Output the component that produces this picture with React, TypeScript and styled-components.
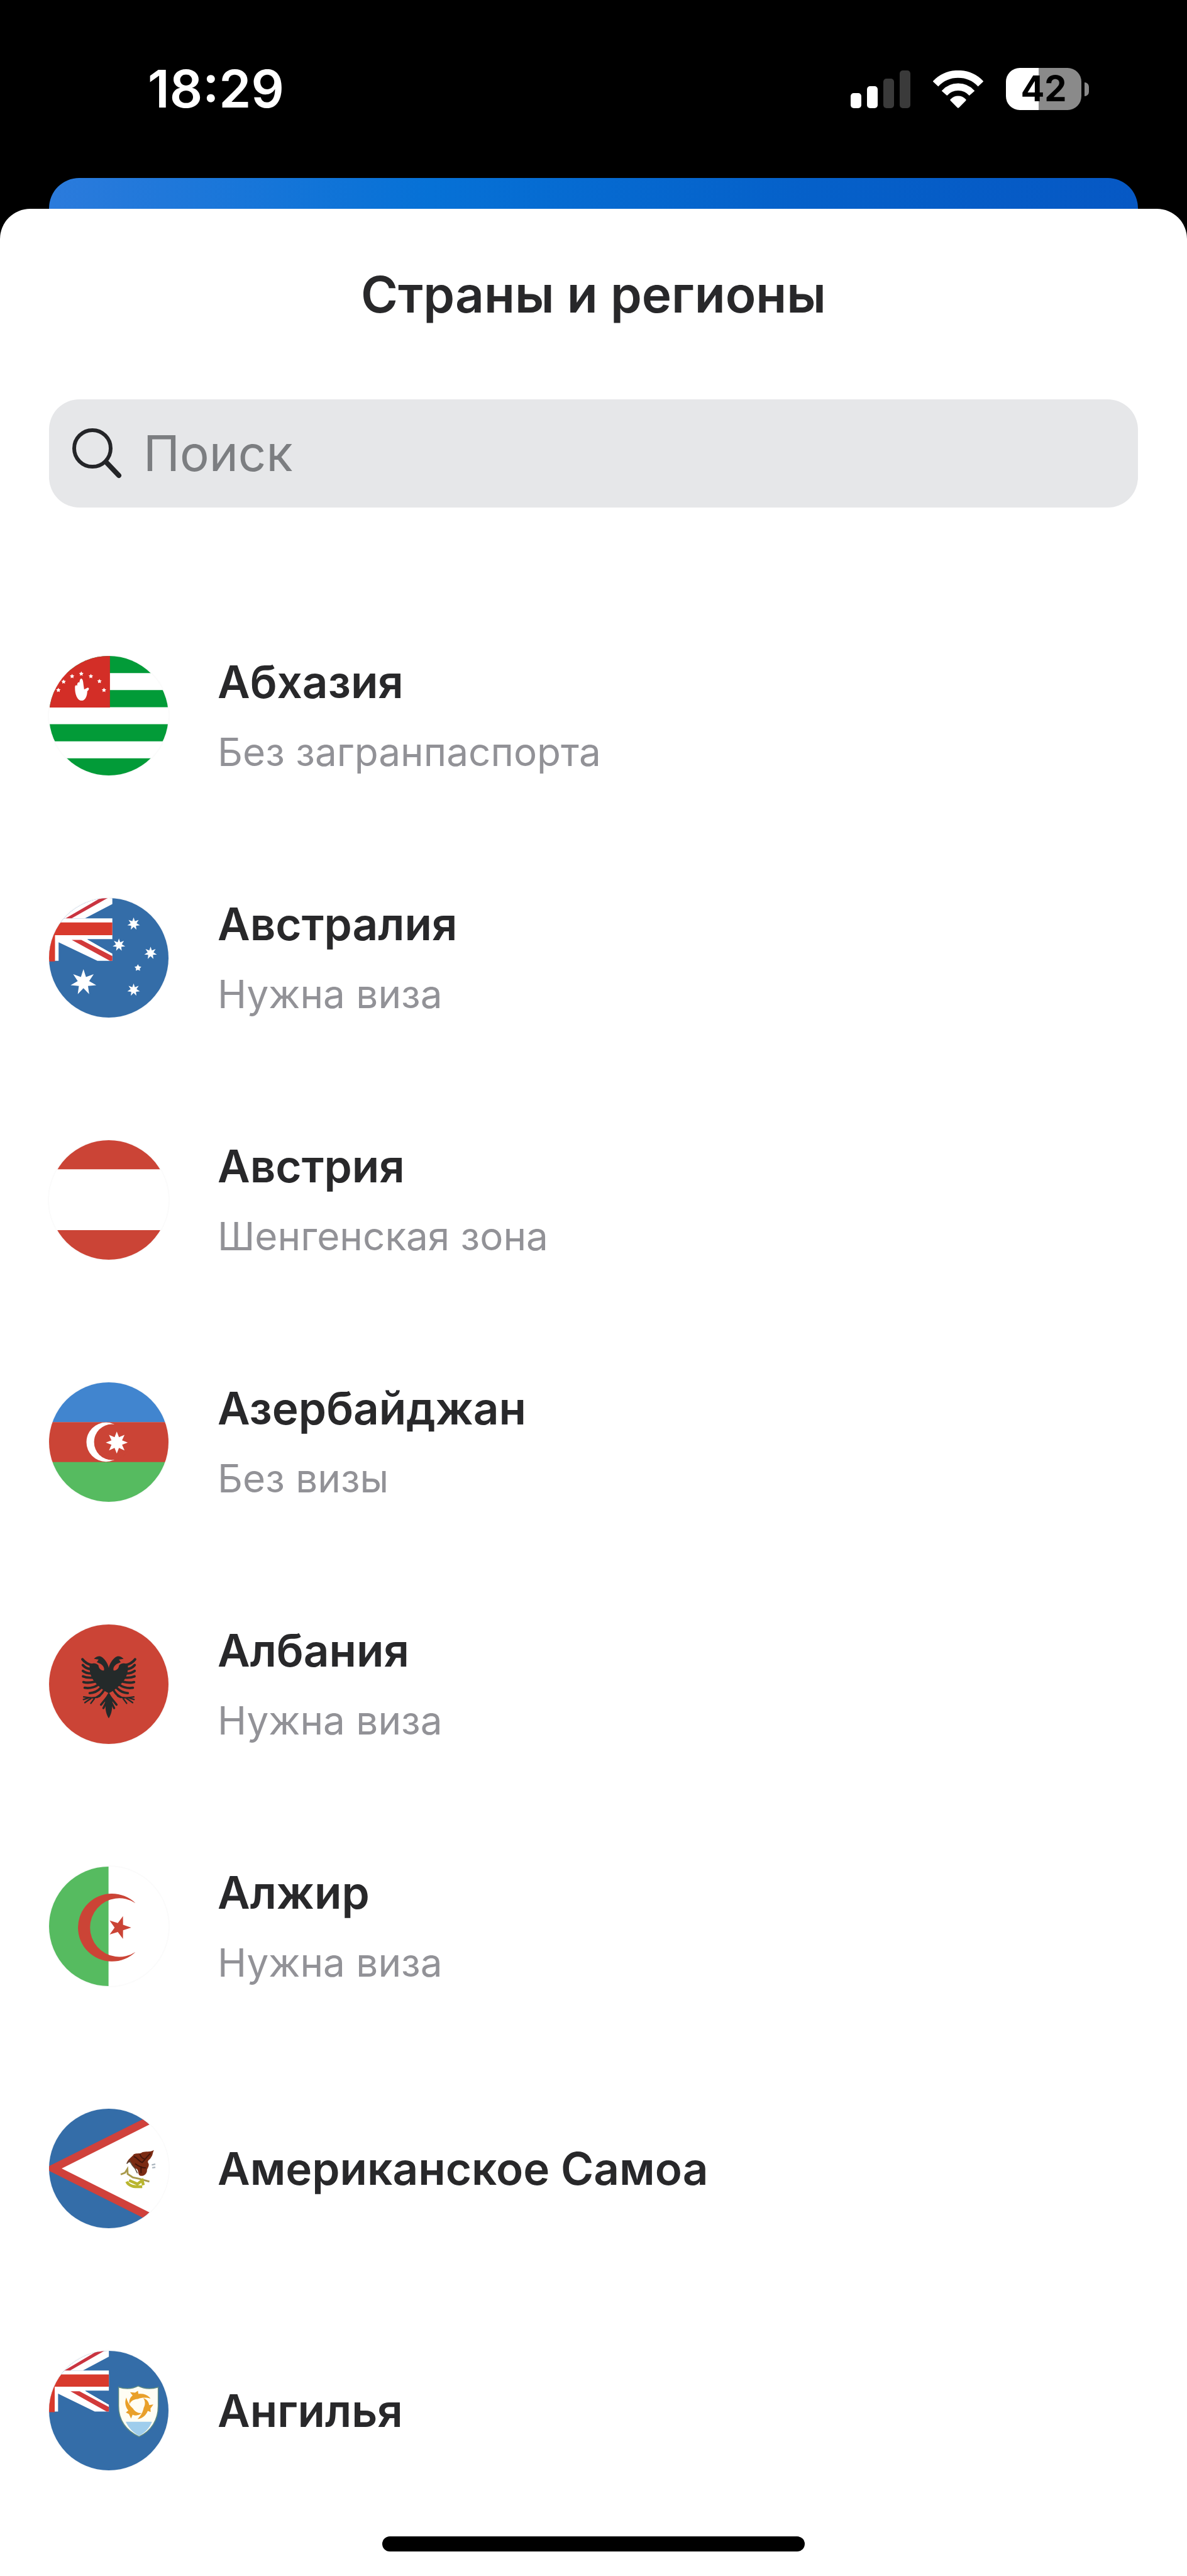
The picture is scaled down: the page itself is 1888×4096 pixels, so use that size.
import React from "react";
import styled, { createGlobalStyle } from "styled-components";

const GlobalStyle = createGlobalStyle`
  *, *::before, *::after { box-sizing: border-box; }
  body {
    margin: 0;
    background: #000;
    font-family: Inter, Roboto, "Liberation Sans", sans-serif;
  }
`;

const Screen = styled.div`
  display: flex;
  flex-direction: column;
  min-height: 100vh;
  background: #000;
`;

const StatusBar = styled.header`
  display: flex;
  align-items: center;
  justify-content: space-between;
  height: 283px;
  padding: 0 156px 0 235px;
`;

const Clock = styled.time`
  color: #fff;
  font-size: 82px;
  line-height: 96px;
  font-weight: 600;
`;

const Indicators = styled.div`
  display: flex;
  align-items: center;
  gap: 36px;
`;

const Battery = styled.div`
  display: flex;
  align-items: center;
  gap: 5px;
`;

const BatteryBody = styled.div<{ $level: number }>`
  width: 120px;
  height: 67px;
  border-radius: 22px;
  background: linear-gradient(
    to right,
    #fff ${(p) => p.$level}%,
    #8a8a8a ${(p) => p.$level}%
  );
  color: #000;
  font-size: 56px;
  line-height: 67px;
  font-weight: 700;
  text-align: center;
`;

const BatteryTip = styled.div`
  width: 7px;
  height: 22px;
  border-radius: 0 7px 7px 0;
  background: #8a8a8a;
`;

const BackCard = styled.div`
  height: 97px;
  margin: 0 78px -48px;
  border-radius: 48px 48px 0 0;
  background: linear-gradient(to right, #2b7bdc 0%, #0671d6 35%, #0560c9 70%, #0658c4 100%);
`;

const Sheet = styled.main`
  display: flex;
  flex-direction: column;
  flex: 1;
  padding: 88px 78px 40px;
  border-radius: 48px 48px 0 0;
  background: #fff;
  z-index: 1;
`;

const Title = styled.h1`
  margin: 0 0 119px;
  color: #28282a;
  font-size: 80px;
  line-height: 96px;
  font-weight: 600;
  text-align: center;
`;

const SearchBox = styled.label`
  display: flex;
  align-items: center;
  gap: 34px;
  height: 172px;
  padding: 0 36px;
  border-radius: 48px;
  background: #e6e7e9;
`;

const SearchInput = styled.input`
  flex: 1;
  min-width: 0;
  padding: 0;
  border: 0;
  outline: 0;
  background: transparent;
  color: #28282a;
  font-family: inherit;
  font-size: 78px;
  line-height: 96px;

  &::placeholder {
    color: #7c7e81;
    opacity: 1;
  }
`;

const CountryList = styled.ul`
  margin: 138px 0 0;
  padding: 0;
  list-style: none;
`;

const CountryButton = styled.button`
  display: flex;
  align-items: center;
  gap: 78px;
  width: 100%;
  height: 385px;
  padding: 0;
  border: 0;
  background: transparent;
  font-family: inherit;
  text-align: left;
  cursor: pointer;
`;

const FlagFrame = styled.svg`
  flex: none;
  width: 190px;
  height: 190px;
  border-radius: 50%;
  background: #fff;
  box-shadow: 0 0 0 2px #fbfbfb;
`;

const CountryText = styled.span`
  display: flex;
  flex-direction: column;
  gap: 28px;
`;

const CountryName = styled.span`
  color: #28282a;
  font-size: 71px;
  line-height: 88px;
  font-weight: 600;
`;

const EntryRule = styled.span`
  color: #929297;
  font-size: 62px;
  line-height: 80px;
`;

const HomeIndicator = styled.div`
  align-self: center;
  width: 672px;
  height: 24px;
  margin-top: 8px;
  border-radius: 12px;
  background: #000;
`;

const BLUE = "#346da8";
const RED = "#cb4436";
const GREEN = "#56bb60";

function starPoints(cx: number, cy: number, n: number, outer: number, inner: number, start = -90) {
  return Array.from({ length: n * 2 }, (_, i) => {
    const r = i % 2 === 0 ? outer : inner;
    const a = ((start + (i * 180) / n) * Math.PI) / 180;
    return `${(cx + r * Math.cos(a)).toFixed(2)},${(cy + r * Math.sin(a)).toFixed(2)}`;
  }).join(" ");
}

function UnionCanton() {
  return (
    <g>
      <path d="M0 -5H53V5L30 17H0Z" fill="#fff" />
      <path d="M12 18L43 0H49L17 18Z" fill="#c93440" />
      <path d="M0 17H53V34.5H32L53 46.5V52.5H40.5L8 37V52.5H0Z" fill="#fff" />
      <path d="M0 20.4H53V31H5V53H0Z" fill="#d83a2d" />
      <path d="M32 34.5H53V46.5Z" fill={BLUE} />
      <path d="M19 35H27L53 48.5V52.5H51Z" fill="#d23a3a" />
    </g>
  );
}

function Abkhazia() {
  const stars = [[7.8, 28.6], [12.2, 21.6], [19.3, 17], [27, 14.9], [35, 17], [42.2, 21.2], [46, 28.6]];
  return (
    <>
      <path d="M0 0H100V14.3H0ZM0 28.6H100V42.9H0ZM0 57.1H100V71.4H0ZM0 85.7H100V100H0Z" fill="#029b38" />
      <path d="M0 0H51V43.2H0Z" fill="#d32e27" />
      {stars.map(([x, y]) => (
        <polygon key={x} points={starPoints(x, y, 5, 2, 1)} fill="#fff" />
      ))}
      <path d="M27 19C28 19 28.6 21 28.8 24L29.4 28L32.5 26.5C34 27 33.5 28.5 32 29.5C32 33 30.5 37.4 27.5 37.4C23.5 37.4 21.6 32 21.7 26C21.8 24.5 22.8 24 23.5 25C23.5 22.5 24.6 21.4 25.4 22.4C25.6 20.4 26.2 19 27 19Z" fill="#fff" />
    </>
  );
}

function Australia() {
  return (
    <>
      <path d="M0 0H100V100H0Z" fill={BLUE} />
      <UnionCanton />
      <g fill="#fff">
        <polygon points={starPoints(28.8, 70.5, 7, 11, 4.9)} />
        <polygon points={starPoints(70.8, 21.6, 7, 5.4, 2.5)} />
        <polygon points={starPoints(58.5, 39.2, 7, 5.4, 2.5)} />
        <polygon points={starPoints(85, 46, 7, 5.4, 2.5)} />
        <polygon points={starPoints(70.8, 76.8, 7, 5.4, 2.5)} />
        <polygon points={starPoints(74.4, 58.4, 5, 3, 1.6)} />
      </g>
    </>
  );
}

function Austria() {
  return <path d="M0 0H100V24.3H0ZM0 75.3H100V100H0Z" fill={RED} />;
}

function Azerbaijan() {
  return (
    <>
      <path d="M0 0H100V33.4H0Z" fill="#4185cf" />
      <path d="M0 33.3H100V66.8H0Z" fill={RED} />
      <path d="M0 66.7H100V100H0Z" fill={GREEN} />
      <circle cx="47.7" cy="50" r="16.4" fill="#fff" />
      <circle cx="52.7" cy="50" r="15" fill={RED} />
      <polygon points={starPoints(56.7, 50.4, 8, 9.2, 4.8)} fill="#fff" />
    </>
  );
}

function AlbaniaWing() {
  return (
    <g>
      <path d="M50 56V36.5C49.5 33 47 29.5 44.5 27.5C42.5 26 40 26.3 37.6 28.8L41.5 29.4L40 31.6L43.5 33.2C45.5 34.8 46.5 36.6 46 38.4C44 39 41.5 37 41.4 34.2C39 32 36 32 34 34C33.5 40 35.5 46 40 50C43.5 53.5 46.5 56 50 57.5Z" />
      <g fill="none" stroke="#242a2a" strokeLinecap="round">
        <path d="M36 34C33 33.4 30 31.8 28 29.2" strokeWidth="2.2" />
        <path d="M35.5 37.5C32 37.2 30 36 28.3 34" strokeWidth="2.1" />
        <path d="M35.5 41C32.5 41 30 40.3 28.3 38.8" strokeWidth="2" />
        <path d="M36.5 44.5C33 44.8 30.5 44.4 28.4 43.4" strokeWidth="2" />
        <path d="M38 48C34.5 48.8 31.5 49 28.8 48.2" strokeWidth="2" />
        <path d="M41 50.5C37.5 53 33.5 53.5 29.8 53" strokeWidth="2" />
        <path d="M43.5 53C41 55.5 37.5 57.5 34 57.4" strokeWidth="2" />
        <path d="M46 55C44.5 57.5 42.5 59.8 40 60.8" strokeWidth="1.8" />
        <path d="M42.5 60C38.5 62 33.5 61.5 29 60.6M35 62L30 65.4M38 62L35 66M33 61.5L28.8 62.8" strokeWidth="1.2" />
        <path d="M48.5 61L43.5 67.2M48.5 64L45.5 70" strokeWidth="1.8" />
      </g>
      <path d="M50 57C47.5 60 46.3 63.5 47.3 67.5C47 71.5 48 75.5 50 78.5Z" />
    </g>
  );
}

function Albania() {
  return (
    <>
      <path d="M0 0H100V100H0Z" fill={RED} />
      <g fill="#242a2a">
        <AlbaniaWing />
        <g transform="translate(100 0) scale(-1 1)">
          <AlbaniaWing />
        </g>
      </g>
    </>
  );
}

function Algeria() {
  return (
    <>
      <path d="M0 0H49.8V100H0Z" fill={GREEN} />
      <path d="M72.4 30.6A28.4 28.4 0 1 0 72.4 71.4A24.5 24.5 0 1 1 72.4 30.6Z" fill={RED} />
      <polygon points={starPoints(58.8, 51, 5, 10, 3.9, 0)} fill={RED} />
    </>
  );
}

function AmericanSamoa() {
  return (
    <>
      <path d="M0 0H84V100H0Z" fill={BLUE} />
      <path d="M-4 50L84 6V94Z" fill="#d0413b" />
      <path d="M10.6 50L100 5.3V94.7Z" fill="#fff" />
      <path d="M65 45.5C66 42 69.5 40.5 71 38C73.5 36.8 76 38 78 36.4C81 35.5 84 36.6 87.8 34.6C86.6 37 87 38.8 85.2 41C84.4 42.6 82.4 43 82.8 45C84.4 47 83 49 82 51C82.4 54 79.6 56.6 76.6 56.2C74 55.4 75.4 52 73.4 50.4C71 49.8 69.4 48 69 45.4C67.6 44.4 66.4 45 65 45.5Z" fill="#7b2b13" />
      <path d="M71 40C74 41 75 44 78 45C80 43 82 40 85 37.4M72 46C75 48 78 50 81 49.4M76 38C77 41 79 42 80 42M77 48V54" fill="none" stroke="#43160b" strokeWidth="1" />
      <path d="M65 46L67.4 43.5L69.5 47L72 50L74 54" fill="none" stroke="#5a4a3c" strokeWidth=".8" />
      <path d="M60 55L63.6 53.6L65.6 50.4L65.8 54.6L70 57.4L75.5 58.6L84 61" fill="none" stroke="#a99a4c" strokeWidth="1.5" />
      <path d="M65 61C67 65.4 72 65.4 78 65.2M67 60L74 63L78 60L79 64" fill="none" stroke="#b9b62f" strokeWidth="2.4" />
      <path d="M86 47L89 46.4M86.4 49.4L89 49" stroke="#aab4bd" strokeWidth="1.2" />
    </>
  );
}

function Anguilla() {
  return (
    <>
      <path d="M0 0H100V100H0Z" fill={BLUE} />
      <g transform="scale(.945 .968)">
        <UnionCanton />
      </g>
      <path d="M58.2 30.4C64 32.2 70 31.8 74.6 29.4C79.5 31.8 85.5 32.2 91.4 30.4V46C91.4 58 85.5 67 75.4 71.8C64.5 67 58.2 58 58.2 46Z" fill="#fffdf4" stroke="#5d8a83" strokeWidth=".8" />
      <path d="M64.2 59.4H86.2C84 64.8 80.4 68.6 75.4 71.2C70.4 68.6 66.8 64.8 64.2 59.4Z" fill="#9fcdec" />
      <g fill="#e9a02a">
        {[0, 120, 240].map((angle) => (
          <path
            key={angle}
            transform={`rotate(${angle} 74.6 45.4)`}
            d="M67.4 44.6C66.6 41.4 68 38.8 70 37.4L67.8 34.6L72 35L74.4 33.4L74.8 36C79 35.4 82.8 36.8 85 40C81.6 39 77.6 39 74.4 40.2C71 40.4 68.6 41.8 67.4 44.6Z"
          />
        ))}
      </g>
    </>
  );
}

type Country = { name: string; rule?: string; Flag: () => React.ReactElement };

const countries: Country[] = [
  { name: "Абхазия", rule: "Без загранпаспорта", Flag: Abkhazia },
  { name: "Австралия", rule: "Нужна виза", Flag: Australia },
  { name: "Австрия", rule: "Шенгенская зона", Flag: Austria },
  { name: "Азербайджан", rule: "Без визы", Flag: Azerbaijan },
  { name: "Албания", rule: "Нужна виза", Flag: Albania },
  { name: "Алжир", rule: "Нужна виза", Flag: Algeria },
  { name: "Американское Самоа", Flag: AmericanSamoa },
  { name: "Ангилья", Flag: Anguilla },
];

function SignalIcon() {
  return (
    <svg width="95" height="60" viewBox="0 0 95 60" aria-hidden="true">
      <rect x="0" y="36" width="17" height="24" rx="5" fill="#fff" />
      <rect x="26" y="25" width="17" height="35" rx="5" fill="#fff" />
      <rect x="52" y="13" width="17" height="47" rx="5" fill="#3a3a3a" />
      <rect x="78" y="0" width="17" height="60" rx="5" fill="#3a3a3a" />
    </svg>
  );
}

function WifiIcon() {
  return (
    <svg width="80" height="60" viewBox="0 0 80 60" aria-hidden="true">
      <g fill="none" stroke="#fff">
        <path d="M4 21.4A49.5 49.5 0 0 1 76 21.4" strokeWidth="12" />
        <path d="M18 36.2A29.4 29.4 0 0 1 62 36.2" strokeWidth="11.5" />
      </g>
      <path d="M28 48.2Q26.6 47 28 45.8Q33 40.6 40 40.6T52 45.8Q53.4 47 52 48.2L41.4 59Q40 60.4 38.6 59Z" fill="#fff" />
    </svg>
  );
}

function SearchIcon() {
  return (
    <svg width="80" height="80" viewBox="0 0 80 80" fill="none" stroke="#242528" strokeLinecap="round" aria-hidden="true">
      <circle cx="33" cy="32" r="29" strokeWidth="6" />
      <path d="M55 54L75 75" strokeWidth="8" />
    </svg>
  );
}

export default function App() {
  return (
    <Screen>
      <GlobalStyle />
      <StatusBar>
        <Clock>18:29</Clock>
        <Indicators>
          <SignalIcon />
          <WifiIcon />
          <Battery>
            <BatteryBody $level={43}>42</BatteryBody>
            <BatteryTip />
          </Battery>
        </Indicators>
      </StatusBar>
      <BackCard />
      <Sheet>
        <Title>Страны и регионы</Title>
        <SearchBox>
          <SearchIcon />
          <SearchInput type="text" placeholder="Поиск" aria-label="Поиск" />
        </SearchBox>
        <CountryList>
          {countries.map(({ name, rule, Flag }) => (
            <li key={name}>
              <CountryButton type="button">
                <FlagFrame viewBox="0 0 100 100" aria-hidden="true">
                  <Flag />
                </FlagFrame>
                <CountryText>
                  <CountryName>{name}</CountryName>
                  {rule && <EntryRule>{rule}</EntryRule>}
                </CountryText>
              </CountryButton>
            </li>
          ))}
        </CountryList>
        <HomeIndicator />
      </Sheet>
    </Screen>
  );
}
